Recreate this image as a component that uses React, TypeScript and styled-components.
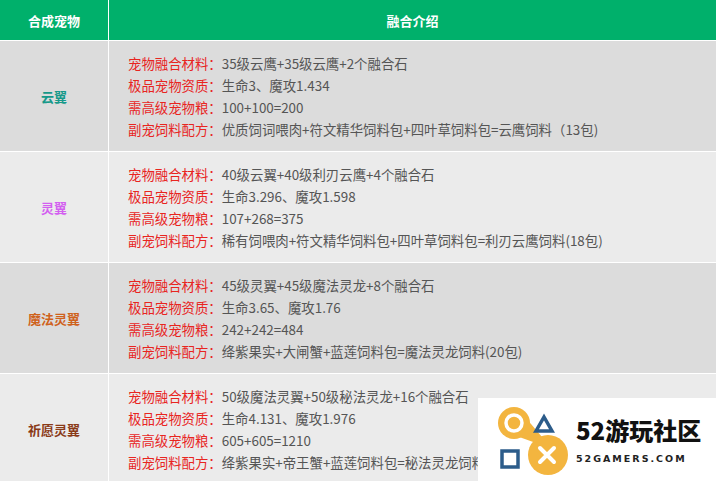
import React from "react";
import styled, { createGlobalStyle } from "styled-components";

const G = createGlobalStyle`
  body { margin:0; font-family: "Microsoft YaHei","Noto Sans CJK SC",sans-serif; background:#fff; overflow:hidden; }
`;
const Wrap = styled.div`position:relative;width:716px;height:481px;overflow:hidden;`;
const Table = styled.div`display:grid;grid-template-columns:108px 1fr;grid-template-rows:40px repeat(4,110px);gap:1px;background:#fff;`;
const Head = styled.div`background:#00b06b;color:#fff;font-weight:bold;font-size:13px;display:flex;align-items:center;justify-content:center;`;
const Name = styled.div<{ $bg: string; $c: string }>`background:${p=>p.$bg};color:${p=>p.$c};font-weight:bold;font-size:13px;display:flex;align-items:center;justify-content:center;`;
const Info = styled.div<{ $bg: string }>`background:${p=>p.$bg};padding:0 0 0 19px;display:flex;flex-direction:column;justify-content:center;font-size:13.4px;line-height:22px;color:#555;white-space:nowrap;`;
const Label = styled.span`color:#e8251f;`;
const Logo = styled.div`position:absolute;left:478px;top:398px;width:238px;height:83px;background:#fff;display:flex;align-items:center;padding-left:18px;box-sizing:border-box;gap:4px;white-space:nowrap;`;
const LogoText = styled.div`display:flex;flex-direction:column;`;
const Big = styled.div`font-family:"Noto Sans CJK SC",sans-serif;font-weight:900;font-size:24px;line-height:30px;color:#111;`;
const Small = styled.div`font-family:"DejaVu Sans",sans-serif;font-weight:bold;font-size:9.5px;letter-spacing:2px;color:#222;margin-top:8px;`;

const rows = [
  { n:"云翼", c:"#17998a", bg:"#dcdcdc", v:["35级云鹰+35级云鹰+2个融合石","生命3、魔攻1.434","100+100=200","优质饲词喂肉+符文精华饲料包+四叶草饲料包=云鹰饲料（13包)"] },
  { n:"灵翼", c:"#d35ff0", bg:"#ebebeb", v:["40级云翼+40级利刃云鹰+4个融合石","生命3.296、魔攻1.598","107+268=375","稀有饲喂肉+符文精华饲料包+四叶草饲料包=利刃云鹰饲料(18包)"] },
  { n:"魔法灵翼", c:"#cf621c", bg:"#dcdcdc", v:["45级灵翼+45级魔法灵龙+8个融合石","生命3.65、魔攻1.76","242+242=484","绛紫果实+大闸蟹+蓝莲饲料包=魔法灵龙饲料(20包)"] },
  { n:"祈愿灵翼", c:"#8a3a18", bg:"#ebebeb", v:["50级魔法灵翼+50级秘法灵龙+16个融合石","生命4.131、魔攻1.976","605+605=1210","绛紫果实+帝王蟹+蓝莲饲料包=秘法灵龙饲料"] },
];
const labels = ["宠物融合材料：","极品宠物资质：","需高级宠物粮：","副宠饲料配方："];

export default function App() {
  return (
    <Wrap>
      <G />
      <Table>
        <Head>合成宠物</Head>
        <Head>融合介绍</Head>
        {rows.map(r => (
          <React.Fragment key={r.n}>
            <Name $bg={r.bg} $c={r.c}>{r.n}</Name>
            <Info $bg={r.bg}>
              {r.v.map((v,i)=>(<div key={i}><Label>{labels[i]}</Label>{v}</div>))}
            </Info>
          </React.Fragment>
        ))}
      </Table>
      <Logo>
        <svg width="76" height="74" viewBox="0 0 76 74">
          <circle cx="18" cy="20" r="16" fill="#f3b53f"/>
          <circle cx="52" cy="52" r="20" fill="#f3b53f"/>
          <path d="M24 8 L46 34 L40 40 L12 30 Z" fill="#f3b53f"/>
          <circle cx="18" cy="20" r="8" fill="none" stroke="#fff" strokeWidth="3.5"/>
          <path d="M40 28 L48 14 L56 28 Z" fill="none" stroke="#2c5c8a" strokeWidth="3.5"/>
          <rect x="6" y="48" width="16" height="16" fill="none" stroke="#2c5c8a" strokeWidth="3.5"/>
          <path d="M44 45 L58 59 M58 45 L44 59" stroke="#fff" strokeWidth="4" strokeLinecap="round"/>
        </svg>
        <LogoText>
          <Big>52游玩社区</Big>
          <Small>52GAMERS.COM</Small>
        </LogoText>
      </Logo>
    </Wrap>
  );
}
